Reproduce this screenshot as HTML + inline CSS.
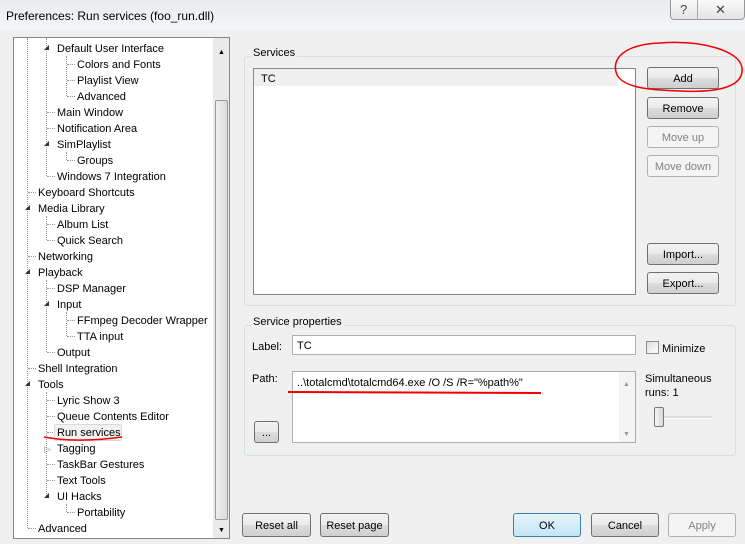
<!DOCTYPE html><html><head><style>
body{margin:0;width:745px;height:544px;overflow:hidden;background:#f0f0f0;font-family:"Liberation Sans",sans-serif;font-size:11px;color:#000;position:relative}
.a{position:absolute}
.btn{position:absolute;height:22px;border:1px solid #707070;border-radius:3px;background:linear-gradient(#f2f2f2 0%,#ebebeb 50%,#dddddd 51%,#cfcfcf 100%);text-align:center;line-height:22px;box-sizing:border-box}
.dis{border-color:#adb2b5;background:#f4f4f4;color:#838383}
.grp{position:absolute;border:1px solid #d5dfe5;border-radius:3px}
.gl{position:absolute;background:#f0f0f0;padding:0 2px;top:-9px;left:6px}
.t{position:absolute;white-space:nowrap;line-height:16px;margin-top:1px}
.tri{position:absolute;width:0;height:0;border-left:5px solid transparent;border-bottom:5px solid #333}
.hl{position:absolute;border-top:1px dotted #999;width:8px}
.vl{position:absolute;border-left:1px dotted #999}
</style></head><body>
<div class="a" style="left:0;top:0;width:745px;height:32px;background:linear-gradient(#e8ecef,#f4f6f8)"></div>
<div class="t" style="left:6px;top:7px;font-size:12px">Preferences: Run services (foo_run.dll)</div>
<div class="a" style="left:670px;top:0;width:75px;height:20px;border:1px solid #999;border-top:0;border-radius:0 0 4px 4px;background:linear-gradient(#fafafa,#e4e4e4);box-sizing:border-box"></div>
<div class="a" style="left:697px;top:0;width:1px;height:20px;background:#aaa"></div>
<div class="t" style="left:680px;top:1px;font-size:13px;color:#444">?</div>
<div class="t" style="left:715px;top:1px;font-size:13px;color:#444">✕</div>
<div class="a" style="left:0;top:30px;width:745px;height:514px;background:#f0f0f0"></div>

<div class="a" style="left:13px;top:37px;width:217px;height:502px;border:1px solid #828790;background:#fff;box-sizing:border-box"></div>
<div class="a" style="left:213px;top:38px;width:16px;height:500px;background:#eaeaea"></div>
<div class="a" style="left:215px;top:100px;width:13px;height:420px;border:1px solid #999;border-radius:2px;background:linear-gradient(90deg,#eee,#dcdcdc);box-sizing:border-box"></div>
<div class="t" style="left:218px;top:44px;font-size:7px">▲</div>
<div class="t" style="left:218px;top:522px;font-size:7px">▼</div>

<div class="vl" style="left:27px;top:38px;height:490px"></div>
<div class="vl" style="left:46px;top:38px;height:138px"></div>
<div class="vl" style="left:66px;top:56px;height:40px"></div>
<div class="vl" style="left:66px;top:152px;height:8px"></div>
<div class="vl" style="left:46px;top:216px;height:24px"></div>
<div class="vl" style="left:46px;top:280px;height:72px"></div>
<div class="vl" style="left:66px;top:312px;height:24px"></div>
<div class="vl" style="left:46px;top:392px;height:104px"></div>
<div class="vl" style="left:66px;top:504px;height:8px"></div>

<div class="tri" style="left:44px;top:45px"></div><div class="t" style="left:57px;top:40px">Default User Interface</div>
<div class="hl" style="left:67px;top:64px"></div><div class="t" style="left:77px;top:56px">Colors and Fonts</div>
<div class="hl" style="left:67px;top:80px"></div><div class="t" style="left:77px;top:72px">Playlist View</div>
<div class="hl" style="left:67px;top:96px"></div><div class="t" style="left:77px;top:88px">Advanced</div>
<div class="hl" style="left:47px;top:112px"></div><div class="t" style="left:57px;top:104px">Main Window</div>
<div class="hl" style="left:47px;top:128px"></div><div class="t" style="left:57px;top:120px">Notification Area</div>
<div class="tri" style="left:44px;top:141px"></div><div class="t" style="left:57px;top:136px">SimPlaylist</div>
<div class="hl" style="left:67px;top:160px"></div><div class="t" style="left:77px;top:152px">Groups</div>
<div class="hl" style="left:47px;top:176px"></div><div class="t" style="left:57px;top:168px">Windows 7 Integration</div>
<div class="hl" style="left:28px;top:192px"></div><div class="t" style="left:38px;top:184px">Keyboard Shortcuts</div>
<div class="tri" style="left:25px;top:205px"></div><div class="t" style="left:38px;top:200px">Media Library</div>
<div class="hl" style="left:47px;top:224px"></div><div class="t" style="left:57px;top:216px">Album List</div>
<div class="hl" style="left:47px;top:240px"></div><div class="t" style="left:57px;top:232px">Quick Search</div>
<div class="hl" style="left:28px;top:256px"></div><div class="t" style="left:38px;top:248px">Networking</div>
<div class="tri" style="left:25px;top:269px"></div><div class="t" style="left:38px;top:264px">Playback</div>
<div class="hl" style="left:47px;top:288px"></div><div class="t" style="left:57px;top:280px">DSP Manager</div>
<div class="tri" style="left:44px;top:301px"></div><div class="t" style="left:57px;top:296px">Input</div>
<div class="hl" style="left:67px;top:320px"></div><div class="t" style="left:77px;top:312px">FFmpeg Decoder Wrapper</div>
<div class="hl" style="left:67px;top:336px"></div><div class="t" style="left:77px;top:328px">TTA input</div>
<div class="hl" style="left:47px;top:352px"></div><div class="t" style="left:57px;top:344px">Output</div>
<div class="hl" style="left:28px;top:368px"></div><div class="t" style="left:38px;top:360px">Shell Integration</div>
<div class="tri" style="left:25px;top:381px"></div><div class="t" style="left:38px;top:376px">Tools</div>
<div class="hl" style="left:47px;top:400px"></div><div class="t" style="left:57px;top:392px">Lyric Show 3</div>
<div class="hl" style="left:47px;top:416px"></div><div class="t" style="left:57px;top:408px">Queue Contents Editor</div>
<div class="hl" style="left:47px;top:432px"></div><div class="a" style="left:54px;top:424px;width:68px;height:17px;border:1px solid #d9d9d9;border-radius:2px;background:#f2f2f2;box-sizing:border-box"></div><div class="t" style="left:57px;top:424px">Run services</div>
<div class="t" style="left:44px;top:440px;font-size:9px;color:#888">▷</div><div class="t" style="left:57px;top:440px">Tagging</div>
<div class="hl" style="left:47px;top:464px"></div><div class="t" style="left:57px;top:456px">TaskBar Gestures</div>
<div class="hl" style="left:47px;top:480px"></div><div class="t" style="left:57px;top:472px">Text Tools</div>
<div class="tri" style="left:44px;top:493px"></div><div class="t" style="left:57px;top:488px">UI Hacks</div>
<div class="hl" style="left:67px;top:512px"></div><div class="t" style="left:77px;top:504px">Portability</div>
<div class="hl" style="left:28px;top:528px"></div><div class="t" style="left:38px;top:520px">Advanced</div>

<div class="grp" style="left:244px;top:56px;width:490px;height:248px"><span class="gl" style="top:-10px">Services</span></div>
<div class="a" style="left:253px;top:68px;width:383px;height:227px;border:1px solid #828790;background:#fff;box-sizing:border-box"></div>
<div class="a" style="left:254px;top:69px;width:364px;height:17px;background:#f0f0f0"></div>
<div class="t" style="left:261px;top:70px">TC</div>
<div class="btn" style="left:647px;top:67px;width:72px">Add</div>
<div class="btn" style="left:647px;top:97px;width:72px">Remove</div>
<div class="btn dis" style="left:647px;top:126px;width:72px">Move up</div>
<div class="btn dis" style="left:647px;top:155px;width:72px">Move down</div>
<div class="btn" style="left:647px;top:243px;width:72px">Import...</div>
<div class="btn" style="left:647px;top:272px;width:72px">Export...</div>

<div class="grp" style="left:244px;top:325px;width:490px;height:129px"><span class="gl" style="top:-10px">Service properties</span></div>
<div class="t" style="left:252px;top:338px">Label:</div>
<div class="a" style="left:292px;top:335px;width:344px;height:20px;border:1px solid #abadb3;background:#fff;box-sizing:border-box"></div>
<div class="t" style="left:297px;top:337px">TC</div>
<div class="a" style="left:646px;top:341px;width:13px;height:13px;border:1px solid #8f8f8f;background:linear-gradient(135deg,#ddd,#fff);box-sizing:border-box"></div>
<div class="t" style="left:662px;top:340px">Minimize</div>
<div class="t" style="left:252px;top:370px">Path:</div>
<div class="a" style="left:292px;top:371px;width:344px;height:72px;border:1px solid #abadb3;background:#fff;box-sizing:border-box"></div>
<div class="a" style="left:619px;top:372px;width:16px;height:70px;background:#f4f4f4"></div>
<div class="t" style="left:623px;top:376px;font-size:7px;color:#999">▲</div>
<div class="t" style="left:623px;top:426px;font-size:7px;color:#999">▼</div>
<div class="t" style="left:297px;top:374px">..\totalcmd\totalcmd64.exe /O /S /R="%path%"</div>
<div class="btn" style="left:254px;top:421px;width:25px">...</div>
<div class="t" style="left:645px;top:371px;line-height:14px">Simultaneous<br>runs: 1</div>
<div class="a" style="left:660px;top:416px;width:52px;height:2px;background:#dcdcdc;border-bottom:1px solid #fff"></div>
<div class="a" style="left:654px;top:407px;width:10px;height:20px;border:1px solid #777;border-radius:2px;background:linear-gradient(90deg,#f5f5f5,#d8d8d8);box-sizing:border-box"></div>

<div class="btn" style="left:242px;top:513px;width:69px;height:24px;line-height:24px">Reset all</div>
<div class="btn" style="left:320px;top:513px;width:69px;height:24px;line-height:24px">Reset page</div>
<div class="btn" style="left:513px;top:513px;width:68px;height:24px;line-height:24px;border-color:#3c7fb1;background:linear-gradient(#e5f4fc,#c4e5f6)">OK</div>
<div class="btn" style="left:591px;top:513px;width:68px;height:24px;line-height:24px">Cancel</div>
<div class="btn dis" style="left:668px;top:513px;width:68px;height:24px;line-height:24px">Apply</div>

<svg class="a" style="left:0;top:0" width="745" height="544">
<path d="M660,43 C700,40 740,50 742,68 C744,86 720,93 680,91 C650,90 620,88 616,72 C612,55 630,44 660,43 Z" fill="none" stroke="#e00" stroke-width="1.5"/>
<path d="M288,392 L541,393" stroke="#e00" stroke-width="2"/>
<path d="M44,437 C70,442 100,440 122,437" fill="none" stroke="#e00" stroke-width="1.5"/>
</svg>
</body></html>
